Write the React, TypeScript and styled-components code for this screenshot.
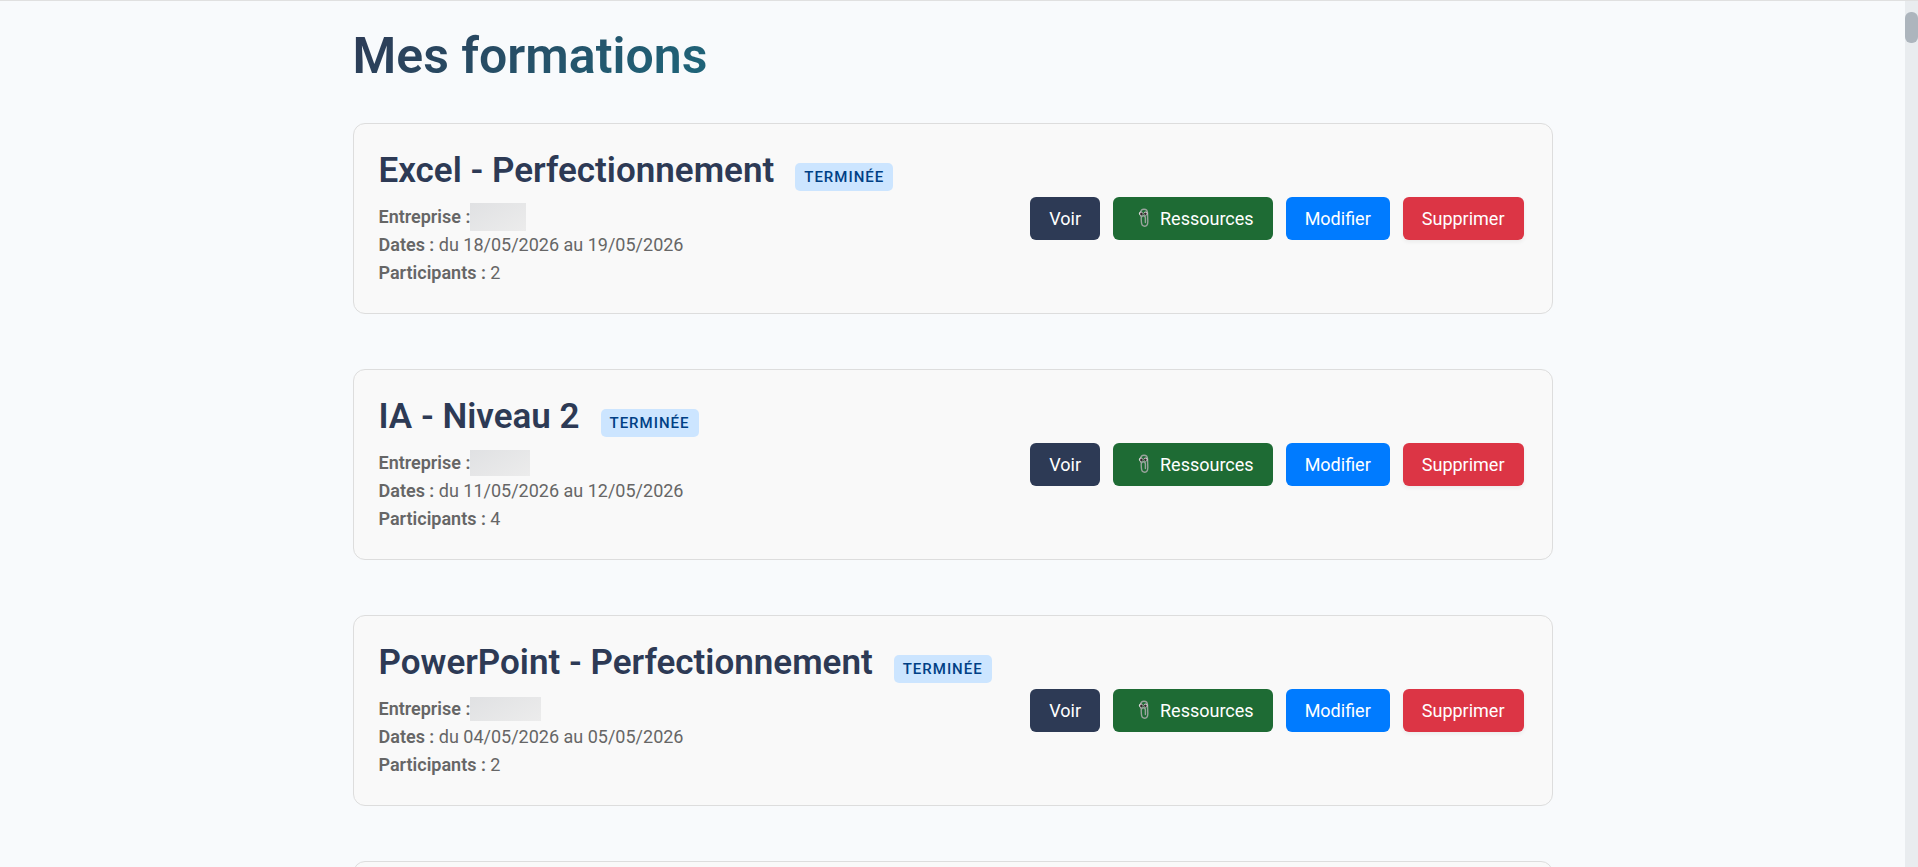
import React from 'react';
import styled, { createGlobalStyle, css } from 'styled-components';

const Global = createGlobalStyle`
  * { box-sizing: border-box; }
  body { margin: 0; background: #f8fafc; font-family: Roboto, sans-serif; color: #666; }
`;

const Viewport = styled.div`
  height: 100vh;
  display: flex;
  overflow: hidden;
  border-top: 1px solid #e0e0e0;
`;

const Main = styled.main`
  flex: 1;
  min-width: 0;
  overflow: hidden;
  padding: 24px 20px 0;
`;

const Container = styled.div`
  max-width: 1200px;
  margin: 0 auto;
`;

const ScrollTrack = styled.div`
  flex: none;
  width: 13px;
  padding-top: 11px;
  background: #e9ecef;
`;

const ScrollThumb = styled.div`
  height: 31px;
  border-radius: 6px;
  background: #adb5bd;
`;

const Title = styled.h1`
  margin: 0 0 36px;
  font-size: 50px;
  line-height: 62px;
  font-weight: 600;
  background: linear-gradient(135deg, #2d3a55 0%, #00c0c8 100%);
  background-clip: text;
  -webkit-background-clip: text;
  color: transparent;
`;

const Card = styled.article`
  display: flex;
  justify-content: space-between;
  align-items: center;
  min-height: 191px;
  margin-bottom: 55px;
  padding: 24px 28px 24px 25px;
  border: 1px solid #dddddd;
  border-radius: 12px;
  background: #f9f9f9;
`;

const Details = styled.div`
  padding-bottom: 2px;
`;

const Heading = styled.h2`
  margin: 0 0 10px;
  font-size: 35px;
  line-height: 44px;
  font-weight: 600;
  color: #2d3a55;
`;

const Badge = styled.span`
  display: inline-block;
  margin-left: 21px;
  padding: 0 9px;
  border-radius: 5px;
  background: #cce5ff;
  color: #004085;
  font-size: 15px;
  line-height: 28px;
  font-weight: 500;
  letter-spacing: 1px;
`;

const Line = styled.p`
  margin: 0;
  font-size: 18px;
  line-height: 28px;
`;

const CompanyLine = styled(Line)`
  display: flex;
  align-items: center;
  height: 28px;
`;

const Label = styled.strong`
  font-weight: 600;
`;

const Mask = styled.span<{ $w: number; $h: number }>`
  width: ${(p) => p.$w}px;
  height: ${(p) => p.$h}px;
  background: linear-gradient(150deg, #e0e1e3, #ececec);
`;

const Actions = styled.div`
  display: flex;
  gap: 13px;
`;

const Button = styled.button<{ $bg: string; $raised?: boolean }>`
  display: flex;
  align-items: center;
  height: 43px;
  padding: 0 19px 1px;
  border: 0;
  border-radius: 6px;
  background: ${(p) => p.$bg};
  color: #fff;
  font: 400 18px Roboto, sans-serif;
  cursor: pointer;
  ${(p) => p.$raised && css`box-shadow: 0 2px 4px rgba(0, 0, 0, 0.06);`}
`;

const ClipIcon = styled.svg`
  width: 24px;
  height: 20px;
  margin-right: 4px;
`;

function Paperclip() {
  return (
    <ClipIcon viewBox="0 0 24 20" fill="none" aria-hidden="true">
      <path
        d="M8.6 8 V4.8 C8.6 2.4 10 1.2 12 1.2 C14.2 1.2 15.4 2.6 15.5 4.8 L15.8 13.6 C15.8 16.6 14.8 18.2 12.8 18.2 C10.6 18.2 9.5 16.6 9.4 14 L9.2 10.6 C9.2 8.8 10.2 7.8 11.4 7.8 C12.8 7.8 13.4 8.8 13.4 10.2 V14.6"
        stroke="#9aa39d"
        strokeWidth="1.4"
        strokeLinecap="round"
      />
      <circle cx="8.9" cy="5.6" r="2" fill="#d9d9d9" />
      <circle cx="13.6" cy="5.4" r="2" fill="#d9d9d9" />
      <circle cx="9.4" cy="5.9" r="1.3" fill="#35242a" />
      <circle cx="13.4" cy="5.7" r="1.3" fill="#35242a" />
    </ClipIcon>
  );
}

const formations = [
  { title: 'Excel - Perfectionnement', maskW: 56, maskH: 28, dates: 'du 18/05/2026 au 19/05/2026', count: 2 },
  { title: 'IA - Niveau 2', maskW: 60, maskH: 26, dates: 'du 11/05/2026 au 12/05/2026', count: 4 },
  { title: 'PowerPoint - Perfectionnement', maskW: 71, maskH: 24, dates: 'du 04/05/2026 au 05/05/2026', count: 2 },
];

export default function App() {
  return (
    <Viewport>
      <Global />
      <Main>
        <Container>
          <Title>Mes formations</Title>
          {formations.map((f) => (
            <Card key={f.title}>
              <Details>
                <Heading>
                  {f.title}
                  <Badge>TERMINÉE</Badge>
                </Heading>
                <CompanyLine>
                  <Label>Entreprise :</Label>
                  <Mask $w={f.maskW} $h={f.maskH} />
                </CompanyLine>
                <Line><Label>Dates :</Label> {f.dates}</Line>
                <Line><Label>Participants :</Label> {f.count}</Line>
              </Details>
              <Actions>
                <Button type="button" $bg="#2d3a55">Voir</Button>
                <Button type="button" $bg="#1e6b34"><Paperclip />Ressources</Button>
                <Button type="button" $bg="#007bff">Modifier</Button>
                <Button type="button" $bg="#dc3545" $raised>Supprimer</Button>
              </Actions>
            </Card>
          ))}
          <Card />
        </Container>
      </Main>
      <ScrollTrack>
        <ScrollThumb />
      </ScrollTrack>
    </Viewport>
  );
}
